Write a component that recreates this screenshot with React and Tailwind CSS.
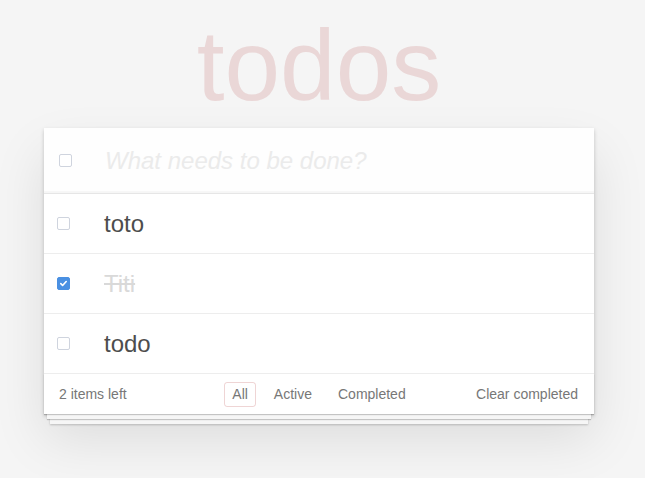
import React from 'react';

const todos = [
  { id: 1, title: 'toto', done: false },
  { id: 2, title: 'Titi', done: true },
  { id: 3, title: 'todo', done: false },
];

const Check = ({ checked }) => (
  <span
    className={
      'flex h-[13px] w-[13px] items-center justify-center rounded-[2px] border ' +
      (checked ? 'border-[#4a90e2] bg-[#4a90e2]' : 'border-[#cfd4de] bg-white')
    }
  >
    {checked && (
      <svg width="9" height="9" viewBox="0 0 10 10" fill="none">
        <path d="M2 5.2l2 2 4-4.4" stroke="white" strokeWidth="1.8" strokeLinecap="round" strokeLinejoin="round" />
      </svg>
    )}
  </span>
);

export default function App() {
  return (
    <div
      className="min-h-[478px] bg-[#f5f5f5] pt-[15px]"
      style={{ fontFamily: '"Liberation Sans", Arial, sans-serif' }}
    >
      <div className="ml-[44px] w-[550px]">
        <h1 className="mb-[13px] text-center text-[100px] font-normal leading-[100px] text-[rgba(175,47,47,0.15)]">
          todos
        </h1>

        <section className="bg-white shadow-[0_2px_4px_0_rgba(0,0,0,0.2),0_25px_50px_0_rgba(0,0,0,0.1)]">
          {/* new todo */}
          <div className="flex h-[65px] items-center bg-[rgba(0,0,0,0.003)] shadow-[inset_0_-2px_1px_rgba(0,0,0,0.03)]">
            <div className="flex w-[60px] pl-[15px]">
              <Check checked={false} />
            </div>
            <input
              type="text"
              placeholder="What needs to be done?"
              className="flex-1 bg-transparent pl-[1px] text-[24px] italic text-[#4d4d4d] outline-none placeholder:text-[#ebebeb]"
            />
          </div>

          {/* list */}
          <ul className="border-t border-[#e6e6e6]">
            {todos.map((t) => (
              <li key={t.id} className="flex h-[60px] items-center border-b border-[#ededed]">
                <div className="flex w-[60px] pl-[13px]">
                  <Check checked={t.done} />
                </div>
                <span
                  className={
                    'text-[24px] ' +
                    (t.done ? 'text-[#d9d9d9] line-through' : 'text-[#4d4d4d]')
                  }
                >
                  {t.title}
                </span>
              </li>
            ))}
          </ul>

          {/* footer */}
          <footer className="grid h-[40px] grid-cols-[1fr_auto_1fr] items-center px-[15px] text-[14px] text-[#777] shadow-[0_1px_1px_rgba(0,0,0,0.2),0_8px_0_-3px_#f6f6f6,0_9px_1px_-3px_rgba(0,0,0,0.2),0_16px_0_-6px_#f6f6f6,0_17px_2px_-6px_rgba(0,0,0,0.2)]">
            <span>2 items left</span>
            <ul className="flex items-center gap-[10px]">
              <li className="rounded-[3px] border border-[rgba(175,47,47,0.2)] px-[7px] py-[3px] leading-[17px]">All</li>
              <li className="rounded-[3px] border border-transparent px-[7px] py-[3px] leading-[17px]">Active</li>
              <li className="rounded-[3px] border border-transparent px-[7px] py-[3px] leading-[17px]">Completed</li>
            </ul>
            <span className="pr-[1px] text-right">Clear completed</span>
          </footer>
        </section>
      </div>
    </div>
  );
}
